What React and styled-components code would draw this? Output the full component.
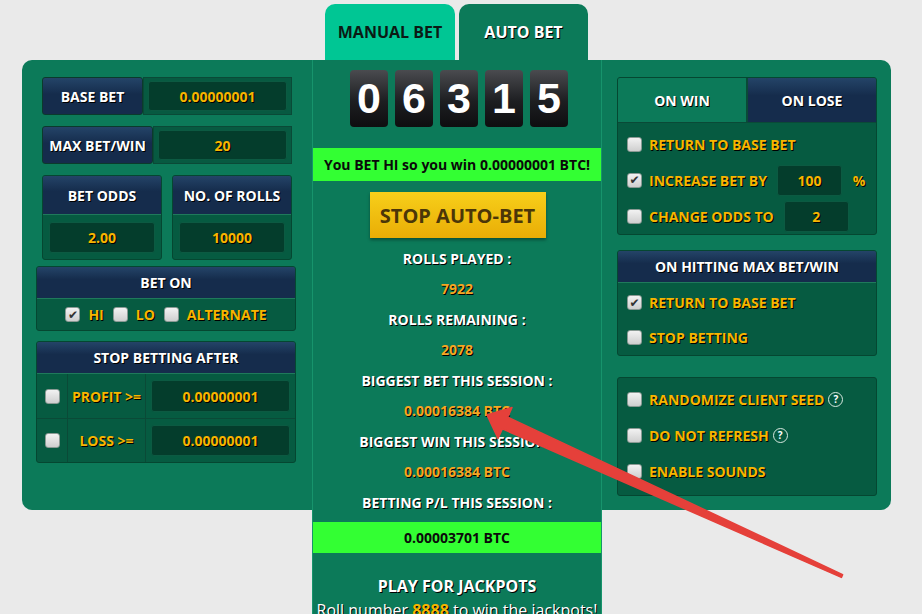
import React from 'react';
import styled, { createGlobalStyle } from 'styled-components';

const GlobalStyle = createGlobalStyle`
  body {
    margin: 0;
    background: #eaeaea;
    font-family: "Open Sans", "DejaVu Sans", sans-serif;
  }
`;

const Page = styled.div`
  position: relative;
  width: 922px;
  height: 614px;
  overflow: hidden;
  padding-top: 4px;
  box-sizing: border-box;
`;

const TabsRow = styled.div`
  display: flex;
  gap: 4px;
  margin-left: 325px;
  height: 56px;
`;

const ModeTab = styled.div`
  width: ${(p) => p.w}px;
  display: flex;
  align-items: center;
  justify-content: center;
  border-radius: 10px 10px 0 0;
  background: ${(p) => (p.active ? '#0c7a59' : '#00c694')};
  color: ${(p) => (p.active ? '#fff' : '#0b1a14')};
  font-weight: 700;
  font-size: 16px;
  text-shadow: ${(p) => (p.active ? '1px 1px 0 #000' : 'none')};
`;

const Board = styled.div`
  margin-left: 22px;
  width: 869px;
  height: 450px;
  display: grid;
  grid-template-columns: 290px 290px 289px;
  align-items: start;
  background: #0c7a59;
  border-radius: 10px;
`;

const Side = styled.div`
  display: flex;
  flex-direction: column;
  padding: ${(p) => p.pad};
`;

const Center = styled.div`
  height: 600px;
  background: #0c7a59;
  border-left: 1px solid #17946c;
  border-right: 1px solid #17946c;
  box-sizing: border-box;
  display: flex;
  flex-direction: column;
  align-items: center;
  padding-top: 10px;
`;

const FieldRow = styled.div`
  display: flex;
  height: 38px;
  margin: 0 4px ${(p) => p.mb || 0}px 6px;
`;

const Label = styled.div`
  width: ${(p) => p.w}px;
  flex-shrink: 0;
  display: flex;
  align-items: center;
  justify-content: center;
  background: linear-gradient(#244468, #152c4c 45%);
  border: 1px solid #0b3a2c;
  border-radius: 3px;
  box-sizing: border-box;
  color: #fff;
  font-weight: 700;
  font-size: 14px;
  text-shadow: 1px 1px 0 #000;
`;

const InputWrap = styled.div`
  flex: 1;
  display: flex;
  padding: 3px 4px;
  background: #075a41;
  border: 1px solid #0a4a37;
  box-sizing: border-box;
`;

const Input = styled.div`
  flex: ${(p) => (p.w ? 'none' : 1)};
  width: ${(p) => (p.w ? `${p.w}px` : 'auto')};
  height: ${(p) => p.h || 'auto'};
  display: flex;
  align-items: center;
  justify-content: center;
  background: #043d2c;
  border: 1px solid #0c5a42;
  border-radius: 3px;
  box-sizing: border-box;
  color: #f7b500;
  font-weight: 700;
  font-size: 14px;
  text-shadow: 1px 1px 0 #000;
`;

const Pair = styled.div`
  display: grid;
  grid-template-columns: 120px 120px;
  gap: 10px;
  margin: 0 4px 6px 6px;
`;

const Box = styled.div`
  display: flex;
  flex-direction: column;
  background: #065b41;
  border: 1px solid #054731;
  border-radius: 3px;
  overflow: hidden;
  margin-bottom: ${(p) => p.mb || 0}px;
`;

const BoxHead = styled.div`
  height: ${(p) => p.h}px;
  box-sizing: border-box;
  display: flex;
  align-items: center;
  justify-content: center;
  background: linear-gradient(#244468, #152c4c 40%);
  border-bottom: 1px solid #1f7a5b;
  color: #fff;
  font-weight: 700;
  font-size: 14px;
  text-shadow: 1px 1px 0 #000;
`;

const OddsBody = styled.div`
  display: flex;
  padding: 7px 6px 6px;
  height: 44px;
  box-sizing: border-box;
`;

const CheckLine = styled.div`
  height: 31px;
  display: flex;
  align-items: center;
  justify-content: center;
  gap: 8px;
`;

const Check = styled.span`
  width: 15px;
  height: 15px;
  flex-shrink: 0;
  box-sizing: border-box;
  display: inline-flex;
  align-items: center;
  justify-content: center;
  background: linear-gradient(#f2f2f2, #cfcfcf);
  border: 1px solid #8a9a94;
  border-radius: 3px;
  color: #333;
  font-size: 12px;
  line-height: 1;
  text-shadow: none;
`;

const Gold = styled.span`
  color: #f7b500;
  font-weight: 700;
  font-size: 14px;
  text-shadow: 1px 1px 0 #000;
  margin-right: ${(p) => p.mr || 0}px;
  white-space: nowrap;
`;

const StopRow = styled.div`
  display: grid;
  grid-template-columns: 30px 78px 1fr;
  height: 44px;
  box-sizing: border-box;
  border-top: ${(p) => (p.first ? 'none' : '1px solid #0a4a37')};
`;

const Cell = styled.div`
  display: flex;
  align-items: center;
  justify-content: center;
  border-left: ${(p) => (p.sep ? '1px solid #0a4a37' : 'none')};
  padding: ${(p) => p.pad || 0};
`;

const Digits = styled.div`
  display: flex;
  gap: 7px;
  margin-left: 4px;
`;

const Digit = styled.div`
  width: 38px;
  height: 57px;
  border-radius: 4px;
  background: linear-gradient(#4a4b4f, #1d1e21 55%, #0e0e10);
  color: #fff;
  font-family: "Liberation Sans", Arial, sans-serif;
  font-weight: 700;
  font-size: 43px;
  display: flex;
  align-items: center;
  justify-content: center;
`;

const Banner = styled.div`
  align-self: stretch;
  height: ${(p) => p.h}px;
  margin-top: ${(p) => p.mt}px;
  background: #33ff33;
  display: flex;
  align-items: center;
  justify-content: center;
  color: #0a0a0a;
  font-weight: 700;
  font-size: 14px;
`;

const StopButton = styled.div`
  margin-top: 11px;
  margin-left: 1px;
  width: 176px;
  height: 46px;
  display: flex;
  align-items: center;
  justify-content: center;
  background: linear-gradient(#f7cf1a, #e9ad06);
  box-shadow: 0 2px 3px rgba(0, 0, 0, 0.35);
  color: #4b3608;
  font-weight: 700;
  font-size: 20px;
`;

const Stats = styled.div`
  margin-top: 5px;
  display: flex;
  flex-direction: column;
  align-items: center;
`;

const StatLine = styled.div`
  height: 30.5px;
  display: flex;
  align-items: center;
  color: ${(p) => (p.value ? '#f5a623' : '#fff')};
  font-weight: 700;
  font-size: 14px;
  text-shadow: 1px 1px 0 #000;
`;

const Jackpot = styled.div`
  margin-top: 22px;
  color: #fff;
  font-weight: 700;
  font-size: 16px;
  text-shadow: 1px 1px 0 #000;
`;

const JackpotNote = styled.div`
  margin-top: 2px;
  color: #fff;
  font-size: 16px;
  white-space: nowrap;
  text-shadow: 1px 1px 0 #000;
  span {
    color: #f7b500;
    font-weight: 700;
  }
`;

const SubTabs = styled.div`
  display: flex;
  height: 44px;
  border-bottom: 1px solid #0a4a37;
`;

const SubTab = styled.div`
  flex: 1;
  display: flex;
  align-items: center;
  justify-content: center;
  background: ${(p) => (p.navy ? 'linear-gradient(#244468, #152c4c 40%)' : '#0c7a59')};
  border-left: ${(p) => (p.navy ? '2px solid #0a4a37' : 'none')};
  color: #fff;
  font-weight: 700;
  font-size: 14px;
  text-shadow: 1px 1px 0 #000;
`;

const OptList = styled.div`
  display: flex;
  flex-direction: column;
  padding: ${(p) => p.pad};
`;

const Opt = styled.div`
  height: ${(p) => p.h || 36}px;
  display: flex;
  align-items: center;
  padding-left: 9px;
  gap: 7px;
`;

const Help = styled.span`
  width: 13px;
  height: 13px;
  border: 1px solid #d8e8e0;
  border-radius: 50%;
  display: inline-flex;
  align-items: center;
  justify-content: center;
  color: #fff;
  font-size: 10px;
  font-weight: 700;
  margin-left: -3px;
`;

const Overlay = styled.svg`
  position: absolute;
  left: 0;
  top: 0;
  pointer-events: none;
`;

const Field = ({ label, w, value, mb }) => (
  <FieldRow mb={mb}>
    <Label w={w}>{label}</Label>
    <InputWrap>
      <Input>{value}</Input>
    </InputWrap>
  </FieldRow>
);

const Checkbox = ({ on }) => <Check>{on ? '✔' : ''}</Check>;

const stats = [
  ['ROLLS PLAYED :', '7922'],
  ['ROLLS REMAINING :', '2078'],
  ['BIGGEST BET THIS SESSION :', '0.00016384 BTC'],
  ['BIGGEST WIN THIS SESSION :', '0.00016384 BTC'],
];

const App = () => (
  <Page>
    <GlobalStyle />
    <TabsRow>
      <ModeTab w={130}>MANUAL BET</ModeTab>
      <ModeTab w={129} active>AUTO BET</ModeTab>
    </TabsRow>
    <Board>
      <Side pad="17px 16px 0 14px">
        <Field label="BASE BET" w={101} value="0.00000001" mb={11} />
        <Field label="MAX BET/WIN" w={111} value="20" mb={11} />
        <Pair>
          <Box>
            <BoxHead h={39}>BET ODDS</BoxHead>
            <OddsBody>
              <Input>2.00</Input>
            </OddsBody>
          </Box>
          <Box>
            <BoxHead h={39}>NO. OF ROLLS</BoxHead>
            <OddsBody>
              <Input>10000</Input>
            </OddsBody>
          </Box>
        </Pair>
        <Box mb={10}>
          <BoxHead h={32}>BET ON</BoxHead>
          <CheckLine>
            <Checkbox on />
            <Gold mr={1}>HI</Gold>
            <Checkbox />
            <Gold mr={1}>LO</Gold>
            <Checkbox />
            <Gold>ALTERNATE</Gold>
          </CheckLine>
        </Box>
        <Box>
          <BoxHead h={32}>STOP BETTING AFTER</BoxHead>
          <StopRow first>
            <Cell><Checkbox /></Cell>
            <Cell sep><Gold>PROFIT &gt;=</Gold></Cell>
            <Cell sep pad="6px 5px 6px 5px"><Input h="100%">0.00000001</Input></Cell>
          </StopRow>
          <StopRow>
            <Cell><Checkbox /></Cell>
            <Cell sep><Gold>LOSS &gt;=</Gold></Cell>
            <Cell sep pad="6px 5px 6px 5px"><Input h="100%">0.00000001</Input></Cell>
          </StopRow>
        </Box>
      </Side>

      <Center>
        <Digits>
          {['0', '6', '3', '1', '5'].map((d, i) => (
            <Digit key={i}>{d}</Digit>
          ))}
        </Digits>
        <Banner h={33} mt={21}>You BET HI so you win 0.00000001 BTC!</Banner>
        <StopButton>STOP AUTO-BET</StopButton>
        <Stats>
          {stats.map(([label, value]) => (
            <React.Fragment key={label}>
              <StatLine>{label}</StatLine>
              <StatLine value>{value}</StatLine>
            </React.Fragment>
          ))}
          <StatLine>BETTING P/L THIS SESSION :</StatLine>
        </Stats>
        <Banner h={31} mt={4}>0.00003701 BTC</Banner>
        <Jackpot>PLAY FOR JACKPOTS</Jackpot>
        <JackpotNote>
          Roll number <span>8888</span> to win the jackpots!
        </JackpotNote>
      </Center>

      <Side pad="17px 14px 0 15px">
        <Box mb={15}>
          <SubTabs>
            <SubTab>ON WIN</SubTab>
            <SubTab navy>ON LOSE</SubTab>
          </SubTabs>
          <OptList pad="3px 0 0">
            <Opt>
              <Checkbox />
              <Gold>RETURN TO BASE BET</Gold>
            </Opt>
            <Opt>
              <Checkbox on />
              <Gold mr={3}>INCREASE BET BY</Gold>
              <Input w={65} h="31px">100</Input>
              <Gold>&nbsp;%</Gold>
            </Opt>
            <Opt>
              <Checkbox />
              <Gold mr={3}>CHANGE ODDS TO</Gold>
              <Input w={65} h="31px">2</Input>
            </Opt>
          </OptList>
        </Box>
        <Box mb={21}>
          <BoxHead h={32}>ON HITTING MAX BET/WIN</BoxHead>
          <OptList pad="2px 0 0">
            <Opt h={35}>
              <Checkbox on />
              <Gold>RETURN TO BASE BET</Gold>
            </Opt>
            <Opt h={35}>
              <Checkbox />
              <Gold>STOP BETTING</Gold>
            </Opt>
          </OptList>
        </Box>
        <Box>
          <OptList pad="3px 0 6px">
            <Opt>
              <Checkbox />
              <Gold>RANDOMIZE CLIENT SEED</Gold>
              <Help>?</Help>
            </Opt>
            <Opt>
              <Checkbox />
              <Gold>DO NOT REFRESH</Gold>
              <Help>?</Help>
            </Opt>
            <Opt>
              <Checkbox />
              <Gold>ENABLE SOUNDS</Gold>
            </Opt>
          </OptList>
        </Box>
      </Side>
    </Board>

    <Overlay width="922" height="614" viewBox="0 0 922 614">
      <polygon
        points="487,415 512,407.5 507.7,417.1 842.6,574.6 841.4,577.4 502.3,428.9 498,438.5"
        fill="#e5403a"
        stroke="#e5403a"
        strokeWidth="1.5"
        strokeLinejoin="round"
      />
    </Overlay>
  </Page>
);

export default App;
